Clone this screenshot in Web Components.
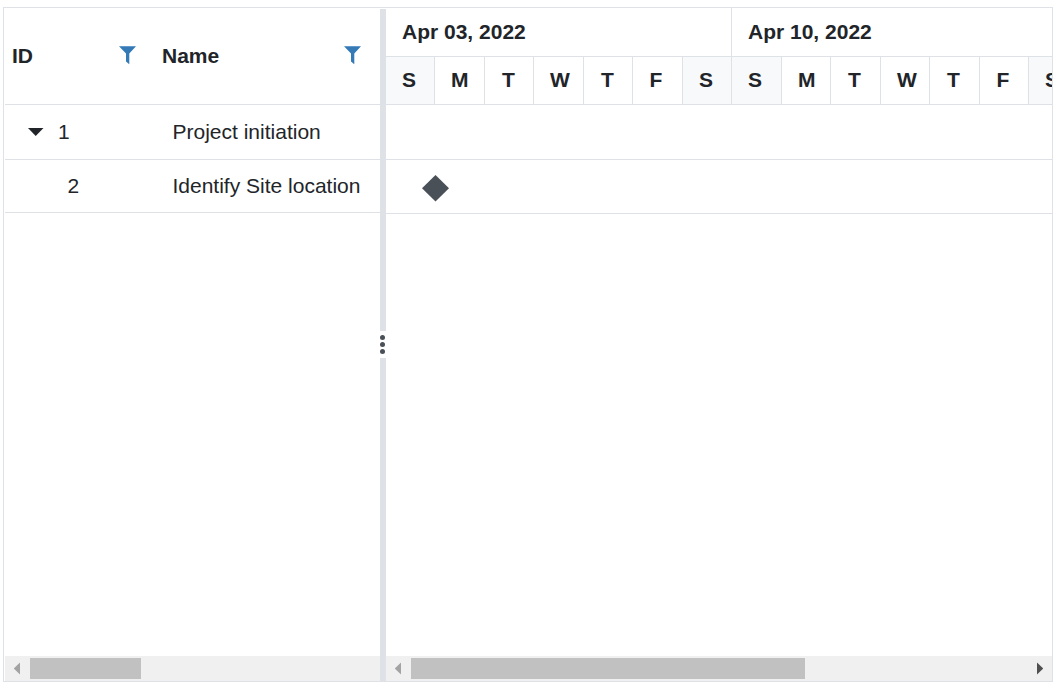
<!DOCTYPE html>
<html lang="en">
<head>
<meta charset="utf-8">
<title>Gantt</title>
<style>
  body { margin: 0; background: #fff; font: 21px/24px "Liberation Sans", Arial, sans-serif; color: #212529; overflow: hidden; --line: #dee2e6; }
</style>
</head>
<body>
<gantt-chart></gantt-chart>
<script>
const define = (name, html, setup) => customElements.define(name, class extends HTMLElement {
  connectedCallback() {
    if (this.shadowRoot) return;
    const t = document.createElement('template');
    t.innerHTML = html;
    this.attachShadow({ mode: 'open' }).append(t.content.cloneNode(true));
    if (setup) setup(this, this.shadowRoot);
  }
});

define('filter-icon', `<style>:host{display:block;width:18px;height:19px}svg{display:block}</style>
<svg width="18" height="19" viewBox="0 0 18 19"><path fill="#337ab7" d="M0 .2H17L10.3 7.5V18.2L7 15.4V7.5Z"/></svg>`);

define('column-header', `<style>
:host{display:flex;align-items:center;justify-content:space-between;box-sizing:border-box;height:97px;padding:0 18px 1px 7px;font-weight:700;border-bottom:1px solid var(--line)}
filter-icon{margin-top:-1px}
</style><span><slot></slot></span><filter-icon></filter-icon>`);

define('tree-row', `<style>
:host{display:grid;grid-template-columns:150px 1fr;box-sizing:border-box;border-bottom:1px solid var(--line);align-items:center;white-space:nowrap}
.id{display:flex;align-items:center;padding-left:var(--indent,23px)}
svg{display:block;margin-right:14px}
:host(:not([expanded])) svg{display:none}
.name{padding-left:17.5px}
</style><div class="id"><svg width="16" height="8" viewBox="0 0 16 8"><path fill="#212529" d="M0 0H15.5L7.7 8Z"/></svg><slot name="id"></slot></div><div class="name"><slot></slot></div>`);

define('scroll-bar', `<style>
:host{display:flex;align-items:center;box-sizing:border-box;height:25px;background:#f0f0f0}
svg{display:block;flex:none}
.thumb{height:21px;background:#c1c1c1;width:var(--thumb)}
.right{margin-left:auto}
:host([plain]) .right{display:none}
</style><svg width="25" height="25" viewBox="0 0 25 25"><path fill="#a3a3a3" d="M15 6.5V18.5L9 12.8V12.2Z"/></svg><div class="thumb"></div>
<svg class="right" width="25" height="25" viewBox="0 0 25 25"><path fill="#505050" d="M10 6.5V18.5L16 12.8V12.2Z"/></svg>`);

define('tree-grid', `<style>
:host{display:flex;flex-direction:column;width:375px;margin-left:1px;overflow:hidden}
.head{display:grid;grid-template-columns:150px 225px}
.one{height:55px}.two{height:53px;--indent:62.5px}
.body{flex:1}
</style><div class="head"><column-header>ID</column-header><column-header>Name</column-header></div>
<div class="body"><tree-row class="one" expanded><span slot="id">1</span>Project initiation</tree-row>
<tree-row class="two"><span slot="id">2</span>Identify Site location</tree-row></div>
<scroll-bar plain style="--thumb:111px"></scroll-bar>`);

define('split-bar', `<style>
:host{display:flex;align-items:center;box-sizing:border-box;width:6px;margin-top:1px;padding-bottom:1px;background:var(--line)}
svg{display:block;background:#fff}
</style><svg width="6" height="27" viewBox="0 0 6 27"><g fill="#495057"><circle cx="2.5" cy="6.5" r="2.5"/><circle cx="2.5" cy="13.5" r="2.5"/><circle cx="2.5" cy="20.5" r="2.5"/></g></svg>`);

define('day-cell', `<style>
:host{display:block;flex:none;box-sizing:border-box;height:48px;line-height:46px;padding-left:var(--inset);font-weight:700;border-right:1px solid var(--line);border-bottom:1px solid var(--line)}
:host([weekend]){background:#f8f9fa}
</style><slot></slot>`);

define('week-head', `<style>
:host{display:block;flex:none}
.title{box-sizing:border-box;height:49px;line-height:48px;padding-left:16px;font-weight:700;border-bottom:1px solid var(--line);border-right:1px solid var(--line)}
.days{display:flex}
</style><div class="title"><slot></slot></div><div class="days"></div>`, (h, r) => {
  const widths = h.getAttribute('widths').split(',');
  const insets = { S: 16, M: 16, T: 17, W: 16, F: 16.5 };
  [...'SMTWTFS'].forEach((d, i) => {
    const c = document.createElement('day-cell');
    c.textContent = d;
    c.style.width = widths[i] + 'px';
    c.style.setProperty('--inset', insets[d] + 'px');
    if (i % 6 === 0) c.setAttribute('weekend', '');
    r.querySelector('.days').append(c);
  });
});

define('time-line', `<style>
:host{display:flex;flex-direction:column;flex:1;min-width:0;overflow:hidden}
.head{display:flex;overflow:hidden}
.body{flex:1}
.row{box-sizing:border-box;height:55px;border-bottom:1px solid var(--line)}
.row+.row{height:54px;display:flex;align-items:center;padding:3px 0 0 36px}
svg{display:block}
</style><div class="head"><week-head widths="49,50,49,50,49,50,49">Apr 03, 2022</week-head><week-head widths="50,49,50,49,50,49,50">Apr 10, 2022</week-head></div>
<div class="body"><div class="row"></div><div class="row"><svg width="27" height="27" viewBox="0 0 27 27"><path fill="#495057" d="M13.5 0L27 13.2L13.5 26.4L0 13.2Z"/></svg></div></div>
<scroll-bar style="--thumb:394px"></scroll-bar>`);

define('gantt-chart', `<style>
:host{display:flex;box-sizing:border-box;width:1050px;height:675px;margin:7px 0 0 3px;border:1px solid var(--line)}
</style><tree-grid></tree-grid><split-bar></split-bar><time-line></time-line>`);
</script>
</body>
</html>
